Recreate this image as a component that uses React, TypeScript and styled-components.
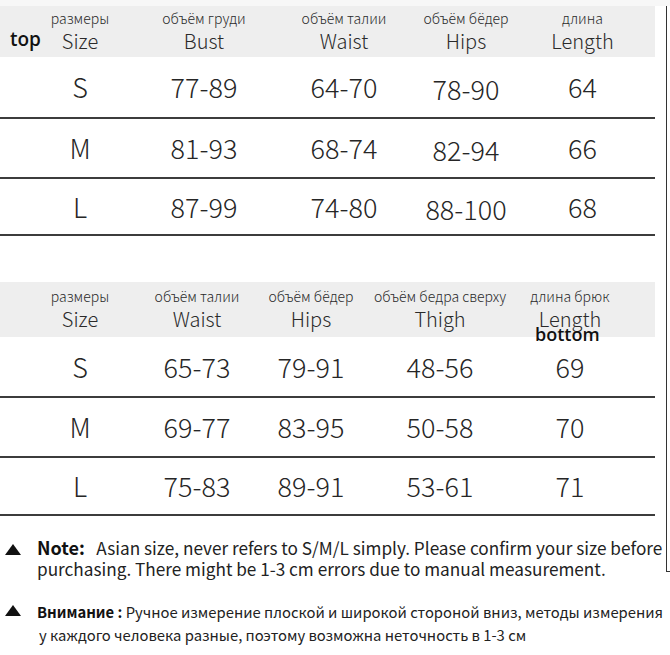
import React from "react";
import styled, { createGlobalStyle } from "styled-components";

const Global = createGlobalStyle`
  html, body { margin: 0; padding: 0; background: #ffffff; }
  body { font-family: "Noto Sans CJK SC", "Noto Sans", sans-serif; color: #222; }
`;

const Page = styled.div`
  position: relative;
  width: 670px;
  height: 655px;
  overflow: hidden;
  background: #fff;
`;

const TopStrip = styled.div`
  height: 6px;
  background: #f7f7f7;
`;

const Table = styled.div<{ $gapTop?: number }>`
  width: 655px;
  margin-top: ${(p) => p.$gapTop ?? 0}px;
`;

const Row = styled.div<{ $cols: string; $h: number; $head?: boolean }>`
  position: relative;
  display: grid;
  grid-template-columns: ${(p) => p.$cols};
  padding-left: 18px;
  height: ${(p) => p.$h}px;
  box-sizing: border-box;
  align-items: center;
  background: ${(p) => (p.$head ? "#eeeeee" : "transparent")};
  border-bottom: ${(p) => (p.$head ? "none" : "2px solid #3c3c3c")};
`;

const HeadCell = styled.div`
  display: flex;
  flex-direction: column;
  align-items: center;
  gap: 4px;
  text-align: center;
  white-space: nowrap;
`;

const Small = styled.span`
  font-size: 14px;
  line-height: 15px;
  font-weight: 300;
  color: #2a2a2a;
`;

const Big = styled.span`
  font-size: 20px;
  line-height: 22px;
  font-weight: 300;
  color: #2a2a2a;
`;

const Cell = styled.div<{ $drop?: number }>`
  text-align: center;
  font-size: 27px;
  line-height: 30px;
  font-weight: 300;
  color: #262626;
  padding-top: ${(p) => p.$drop ?? 0}px;
  white-space: nowrap;
`;

const Tag = styled.span<{ $left: number; $top: number; $size: number }>`
  position: absolute;
  left: ${(p) => p.$left}px;
  top: ${(p) => p.$top}px;
  font-family: "Open Sans", "Noto Sans", sans-serif;
  font-weight: 600;
  font-size: ${(p) => p.$size}px;
  line-height: 20px;
  color: #111;
`;

const Notes = styled.div`
  margin-top: 21px;
  display: flex;
  flex-direction: column;
  gap: 21px;
`;

const Note = styled.div`
  display: flex;
  align-items: flex-start;
`;

const Tri = styled.span<{ $top: number }>`
  width: 0;
  height: 0;
  margin: ${(p) => p.$top}px 16px 0 5px;
  border-left: 8.5px solid transparent;
  border-right: 8.5px solid transparent;
  border-bottom: 11px solid #111;
  flex: none;
`;

const NoteText = styled.div<{ $size: number; $lh: number }>`
  font-size: ${(p) => p.$size}px;
  line-height: ${(p) => p.$lh}px;
  color: #222;
  white-space: nowrap;
`;

const Strong = styled.span<{ $size?: number }>`
  font-weight: 700;
  font-size: ${(p) => (p.$size ? `${p.$size}px` : "inherit")};
  color: #111;
`;

const Indent = styled.span`
  padding-left: 2px;
`;

const Frame = styled.div`
  position: absolute;
  left: 666px;
  top: 6px;
  width: 6px;
  height: 565px;
  border-left: 1.5px solid #333;
  border-bottom: 1px solid #333;
`;

const top = {
  cols: "124px 124px 156px 88px 145px",
  head: [
    ["размеры", "Size"],
    ["объём груди", "Bust"],
    ["объём талии", "Waist"],
    ["объём бёдер", "Hips"],
    ["длина", "Length"],
  ],
  rows: [
    { h: 62, v: ["S", "77-89", "64-70", "78-90", "64"] },
    { h: 60, v: ["M", "81-93", "68-74", "82-94", "66"] },
    { h: 57, v: ["L", "87-99", "74-80", "88-100", "68"] },
  ],
  drop: [0, 0, 0, 4, 0],
};

const bottom = {
  cols: "124px 110px 118px 140px 120px",
  head: [
    ["размеры", "Size"],
    ["объём талии", "Waist"],
    ["объём бёдер", "Hips"],
    ["объём бедра сверху", "Thigh"],
    ["длина брюк", "Length"],
  ],
  rows: [
    { h: 61, v: ["S", "65-73", "79-91", "48-56", "69"] },
    { h: 60, v: ["M", "69-77", "83-95", "50-58", "70"] },
    { h: 58, v: ["L", "75-83", "89-91", "53-61", "71"] },
  ],
  drop: [0, 0, 0, 0, 0],
};

type Spec = typeof top;

const SizeTable = ({ spec, gapTop, tag }: { spec: Spec; gapTop?: number; tag: React.ReactNode }) => (
  <Table $gapTop={gapTop}>
    <Row $cols={spec.cols} $h={spec === top ? 51 : 55} $head>
      {spec.head.map(([s, b]) => (
        <HeadCell key={s}>
          <Small>{s}</Small>
          <Big>{b}</Big>
        </HeadCell>
      ))}
      {tag}
    </Row>
    {spec.rows.map((r) => (
      <Row key={r.v[0]} $cols={spec.cols} $h={r.h}>
        {r.v.map((x, i) => (
          <Cell key={i} $drop={spec.drop[i]}>
            {x}
          </Cell>
        ))}
      </Row>
    ))}
  </Table>
);

export default function App() {
  return (
    <Page>
      <Global />
      <TopStrip />
      <SizeTable spec={top} tag={<Tag $left={10} $top={23} $size={19}>top</Tag>} />
      <SizeTable spec={bottom} gapTop={46} tag={<Tag $left={535} $top={42} $size={18}>bottom</Tag>} />
      <Notes>
        <Note>
          <Tri $top={7} />
          <NoteText $size={17.2} $lh={21}>
            <Strong $size={18}>Note:</Strong>
            {"\u00a0\u00a0 "}Asian size, never refers to S/M/L simply. Please confirm your size before
            <br />
            purchasing. There might be 1-3 cm errors due to manual measurement.
          </NoteText>
        </Note>
        <Note>
          <Tri $top={5} />
          <NoteText $size={14.8} $lh={23}>
            <Strong>Внимание :</Strong> Ручное измерение плоской и широкой стороной вниз, методы измерения
            <br />
            <Indent>у каждого человека разные, поэтому возможна неточность в 1-3 см</Indent>
          </NoteText>
        </Note>
      </Notes>
      <Frame />
    </Page>
  );
}
